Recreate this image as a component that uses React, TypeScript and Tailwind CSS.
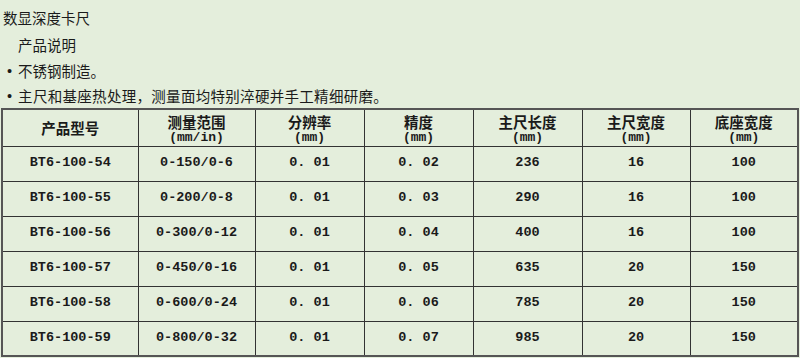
const rows = [
  ['BT6-100-54', '0-150/0-6', '0. 01', '0. 02', '236', '16', '100'],
  ['BT6-100-55', '0-200/0-8', '0. 01', '0. 03', '290', '16', '100'],
  ['BT6-100-56', '0-300/0-12', '0. 01', '0. 04', '400', '16', '100'],
  ['BT6-100-57', '0-450/0-16', '0. 01', '0. 05', '635', '20', '150'],
  ['BT6-100-58', '0-600/0-24', '0. 01', '0. 06', '785', '20', '150'],
  ['BT6-100-59', '0-800/0-32', '0. 01', '0. 07', '985', '20', '150'],
];

const heads: [string, string | null][] = [
  ['产品型号', null],
  ['测量范围', '(mm/in)'],
  ['分辨率', '(mm)'],
  ['精度', '(mm)'],
  ['主尺长度', '(mm)'],
  ['主尺宽度', '(mm)'],
  ['底座宽度', '(mm)'],
];

const widths = ['w-[136px]', 'w-[117px]', 'w-[109px]', 'w-[109px]', 'w-[109px]', 'w-[108px]', 'w-[108px]'];

export default function App() {
  return (
    <div className="w-[800px] h-[358px] bg-[#e4eedc] text-[#1a1a1a] overflow-hidden font-['Noto_Sans_CJK_SC',sans-serif]">
      <div className="pt-[5px] text-[14.5px]">
        <p className="h-[27px] leading-[26px] pl-[3px]">数显深度卡尺</p>
        <p className="h-[26px] leading-[26px] pl-[18px]">产品说明</p>
        <p className="h-[26px] leading-[26px] pl-[7px] flex gap-[6px]">
          <span className="font-['Liberation_Sans',sans-serif]">•</span>
          <span>不锈钢制造。</span>
        </p>
        <p className="h-[24px] leading-[24px] pl-[7px] flex gap-[6px]">
          <span className="font-['Liberation_Sans',sans-serif]">•</span>
          <span className="tracking-[0.3px]">主尺和基座热处理，测量面均特别淬硬并手工精细研磨。</span>
        </p>
      </div>

      <table className="ml-[1px] border-collapse border-2 border-[#555] table-fixed w-[797px]">
        <thead>
          <tr className="h-[37px]">
            {heads.map(([a, b], i) => (
              <th key={i} className={`${widths[i]} border border-[#333] text-center align-middle p-0 font-bold`}>
                <div className={b ? 'pt-[2px]' : 'pt-[1px]'}>
                  <div className="text-[14.5px] leading-[18px] h-[18px]">{a}</div>
                  {b && (
                    <div className="text-[13px] leading-[14px] h-[14px] font-['Liberation_Mono',monospace] font-bold">
                      {b}
                    </div>
                  )}
                </div>
              </th>
            ))}
          </tr>
        </thead>
        <tbody>
          {rows.map((r, i) => (
            <tr key={i} className="h-[35px]">
              {r.map((c, j) => (
                <td
                  key={j}
                  className="border border-[#333] text-center align-middle p-0 text-[13.5px] font-['Liberation_Mono',monospace] font-bold"
                >
                  {c}
                </td>
              ))}
            </tr>
          ))}
        </tbody>
      </table>
    </div>
  );
}
